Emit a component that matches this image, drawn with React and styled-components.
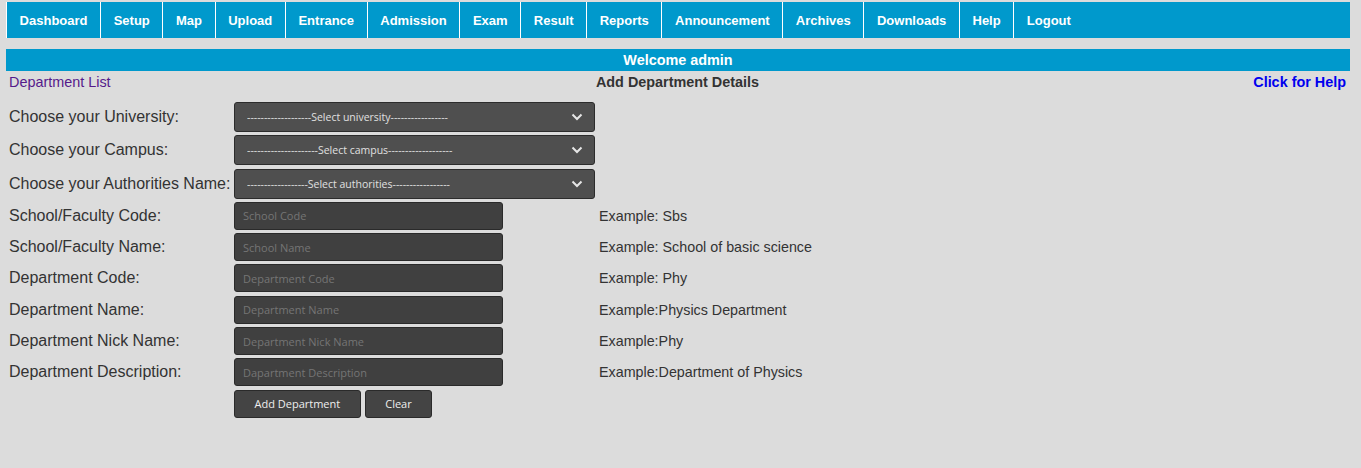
import React from 'react';
import styled, { createGlobalStyle } from 'styled-components';

const GlobalStyle = createGlobalStyle`
  body {
    margin: 0;
    background-color: #dcdcdc;
    font-family: "Liberation Sans", Arial, sans-serif;
  }
`;

const menu = [
  'Dashboard', 'Setup', 'Map', 'Upload', 'Entrance', 'Admission', 'Exam',
  'Result', 'Reports', 'Announcement', 'Archives', 'Downloads', 'Help', 'Logout',
];

const selects = [
  { label: 'Choose your University:', text: '-------------------Select university-----------------' },
  { label: 'Choose your Campus:', text: '---------------------Select campus-------------------' },
  { label: 'Choose your Authorities Name:', text: '------------------Select authorities-----------------' },
];

const inputs = [
  { label: 'School/Faculty Code:', ph: 'School Code', example: 'Example: Sbs' },
  { label: 'School/Faculty Name:', ph: 'School Name', example: 'Example: School of basic science' },
  { label: 'Department Code:', ph: 'Department Code', example: 'Example: Phy' },
  { label: 'Department Name:', ph: 'Department Name', example: 'Example:Physics Department' },
  { label: 'Department Nick Name:', ph: 'Department Nick Name', example: 'Example:Phy' },
  { label: 'Department Description:', ph: 'Dapartment Description', example: 'Example:Department of Physics' },
];

const App = () => {
  return (
    <Page>
      <GlobalStyle />
      <Nav>
        {menu.map((m) => (
          <NavItem key={m} href="#">{m}</NavItem>
        ))}
      </Nav>
      <Welcome>Welcome admin</Welcome>
      <HeadRow>
        <ListLink href="#">Department List</ListLink>
        <Title>Add Department Details</Title>
        <HelpLink href="#">Click for Help</HelpLink>
      </HeadRow>
      <Form>
        {selects.map((s) => (
          <React.Fragment key={s.label}>
            <Label>{s.label}</Label>
            <SelectWrap>
              <Select defaultValue="">
                <option value="">{s.text}</option>
              </Select>
              <Chevron viewBox="0 0 12 8" width="12" height="8">
                <path d="M1.5 1.5 L6 6 L10.5 1.5" fill="none" stroke="#e6e6e6" strokeWidth="2" />
              </Chevron>
            </SelectWrap>
            <Example />
          </React.Fragment>
        ))}
        {inputs.map((f) => (
          <React.Fragment key={f.label}>
            <Label>{f.label}</Label>
            <Field>
              <Input placeholder={f.ph} />
            </Field>
            <Example>{f.example}</Example>
          </React.Fragment>
        ))}
        <Label />
        <Buttons>
          <Button>Add Department</Button>
          <Button>Clear</Button>
        </Buttons>
        <Example />
      </Form>
    </Page>
  );
};

const Page = styled.div`
  padding: 2px 11px 0 6px;
  min-height: 466px;
`;

const Nav = styled.nav`
  display: flex;
  height: 36px;
  background-color: #0099cc;
`;

const NavItem = styled.a`
  display: flex;
  align-items: center;
  padding: 1px 12.6px 0 12.6px;
  border-left: 1px solid #ffffff;
  color: #ffffff;
  font-weight: bold;
  font-size: 13px;
  text-decoration: none;
`;

const Welcome = styled.div`
  margin-top: 11px;
  height: 22px;
  line-height: 22px;
  background-color: #0099cc;
  color: #ffffff;
  font-weight: bold;
  font-size: 14.4px;
  text-align: center;
`;

const HeadRow = styled.div`
  display: grid;
  grid-template-columns: 1fr auto 1fr;
  align-items: center;
  height: 22px;
  padding: 0 4px 0 3px;
  font-size: 14.4px;
`;

const ListLink = styled.a`
  color: #551a8b;
  text-decoration: none;
`;

const Title = styled.div`
  font-weight: bold;
  color: #333333;
`;

const HelpLink = styled.a`
  justify-self: end;
  color: #0000ee;
  font-weight: bold;
  text-decoration: none;
`;

const Form = styled.div`
  display: grid;
  grid-template-columns: 225px 365px 1fr;
  row-gap: 3.3px;
  align-items: center;
  margin-top: 9px;
  padding-left: 3px;
`;

const Label = styled.div`
  font-size: 16px;
  color: #333333;
  white-space: nowrap;
`;

const SelectWrap = styled.div`
  position: relative;
  width: 361px;
  height: 30px;
`;

const Select = styled.select`
  appearance: none;
  width: 100%;
  height: 100%;
  padding: 0 30px 0 12px;
  background-color: #4f4f4f;
  border: 1px solid #2c2c2c;
  border-radius: 3px;
  color: #e0e0e0;
  font-family: "Open Sans", sans-serif;
  font-size: 10.5px;
  box-sizing: border-box;
  outline: none;
`;

const Chevron = styled.svg`
  position: absolute;
  right: 12px;
  top: 11px;
  pointer-events: none;
`;

const Field = styled.div`
  height: 28px;
`;

const Input = styled.input`
  width: 269px;
  height: 28px;
  box-sizing: border-box;
  padding: 0 8px;
  background-color: #404040;
  border: 1px solid #2a2a2a;
  border-radius: 3px;
  color: #e0e0e0;
  font-family: "Open Sans", sans-serif;
  font-size: 11px;
  outline: none;

  ::placeholder {
    color: #9a9a9a;
  }
`;

const Example = styled.div`
  font-size: 14.3px;
  color: #333333;
`;

const Buttons = styled.div`
  display: flex;
  gap: 4px;
`;

const Button = styled.button`
  height: 28px;
  padding: 0 19.5px;
  background-color: #444444;
  border: 1px solid #2a2a2a;
  border-radius: 3px;
  color: #eeeeee;
  font-family: "Open Sans", sans-serif;
  font-size: 11px;
  cursor: pointer;
`;

export default App;
